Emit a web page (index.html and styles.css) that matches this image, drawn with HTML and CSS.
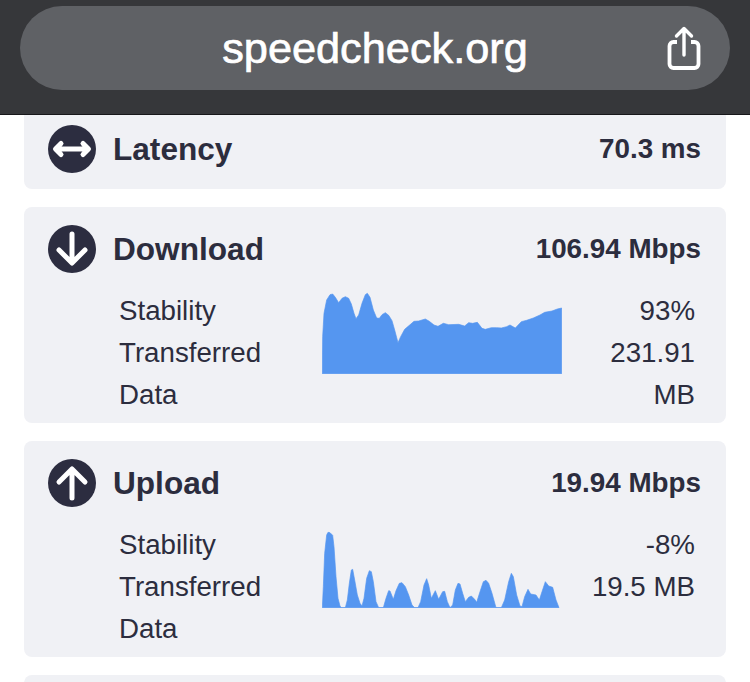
FILE: index.html
```html
<!DOCTYPE html>
<html>
<head lang="en">
	<meta charset="UTF-8">
	<title>speedcheck.org</title>
	<link rel="stylesheet" href="styles.css">
</head>
<body>
	<!-- browser address bar -->
	<header class="topbar">
		<div class="url-pill">
			<span class="url-text">speedcheck.org</span>
			<svg class="share-icon" width="36" height="44" viewBox="0 0 36 44">
				<path d="M11 16H7.500a4 4 0 0 0-4 4v18a4 4 0 0 0 4 4h21a4 4 0 0 0 4-4V20a4 4 0 0 0-4-4H25" fill="none" stroke="#fff" stroke-width="3.800"/>
				<path d="M18 29V3M10.500 10L18 2.500L25.500 10" fill="none" stroke="#fff" stroke-width="3.400" stroke-linecap="round" stroke-linejoin="round"/>
			</svg>
		</div>
	</header>

	<main class="results">
		<section class="card card-cut">
			<div class="card-head">
				<svg class="round-icon" width="48" height="48" viewBox="0 0 48 48">
					<circle cx="24" cy="24" r="24" fill="#2c2d40"/>
					<path d="M10 24H38M13 18.500L7.500 24L13 29.500M35 18.500L40.500 24L35 29.500" fill="none" stroke="#fff" stroke-width="5" stroke-linejoin="round" stroke-linecap="round"/>
				</svg>
				<h2 class="card-title">Latency</h2>
				<span class="card-value">70.3 ms</span>
			</div>
		</section>

		<section class="card">
			<div class="card-head">
				<svg class="round-icon" width="48" height="48" viewBox="0 0 48 48">
					<circle cx="24" cy="24" r="24" fill="#2c2d40"/>
					<path d="M24 9V37M11 25L24 38L37 25" fill="none" stroke="#fff" stroke-width="5" stroke-linejoin="round" stroke-linecap="round"/>
				</svg>
				<h2 class="card-title">Download</h2>
				<span class="card-value">106.94 Mbps</span>
			</div>
			<div class="card-body">
				<div class="labels">
					<div>Stability</div>
					<div>Transferred Data</div>
				</div>
				<svg class="chart" width="240" height="82" viewBox="36 36 720 246">
					<path d="M37 281L38 170L42 100L50 60L60 44L68 42L76 52L86 68L96 55L106 50L116 55L124 72L132 100L138 116L146 105L156 70L166 44L172 40L180 52L190 90L200 114L208 115L216 104L226 98L236 106L246 122L254 150L264 188L272 170L284 148L298 136L312 124L326 123L346 117L358 124L372 135L384 139L400 130L416 134L446 133L464 138L476 128L488 130L502 127L516 145L526 148L544 143L560 143L574 144L590 140L600 135L616 144L634 125L650 121L670 114L690 105L704 97L726 93L742 87L755 84V281Z"/>
				</svg>
				<div class="values">
					<div>93%</div>
					<div>231.91 MB</div>
				</div>
			</div>
		</section>

		<section class="card">
			<div class="card-head">
				<svg class="round-icon" width="48" height="48" viewBox="0 0 48 48">
					<circle cx="24" cy="24" r="24" fill="#2c2d40"/>
					<path d="M24 39V11M11 23L24 10L37 23" fill="none" stroke="#fff" stroke-width="5" stroke-linejoin="round" stroke-linecap="round"/>
				</svg>
				<h2 class="card-title">Upload</h2>
				<span class="card-value">19.94 Mbps</span>
			</div>
			<div class="card-body">
				<div class="labels">
					<div>Stability</div>
					<div>Transferred Data</div>
				</div>
				<svg class="chart" width="240" height="82" viewBox="36 18 720 246">
					<path d="M37 263L40 200L44 100L50 45L54 37L60 38L68 46L72 80L78 170L84 235L90 258L94 263H106L112 240L118 190L124 150L128 148L134 180L142 225L150 250L156 258L162 235L170 175L178 152L184 155L190 185L198 245L206 263H220L228 235L236 212L240 213L250 238L258 212L268 190L276 188L286 200L296 225L306 255L314 263H324L332 245L342 195L350 176L356 195L364 235L376 212L386 238L398 215L404 214L412 245L420 263L428 255L436 210L444 190L450 192L458 220L466 245L476 232L484 228L494 238L500 247L510 215L520 185L528 181L536 190L546 220L558 263H574L584 240L596 185L604 160L610 170L620 225L630 258L636 260L644 230L654 208L662 222L678 225L688 240L696 215L706 185L716 198L728 202L738 240L747 263Z"/>
				</svg>
				<div class="values">
					<div>-8%</div>
					<div>19.5 MB</div>
				</div>
			</div>
		</section>

		<section class="card card-next"></section>
	</main>
</body>
</html>
```

FILE: styles.css
```css
html, body {
	margin: 0;
	height: 682px;
	overflow: hidden;
}

body {
	background-color: #FFFFFF;
	font-family: "Liberation Sans", Arial, sans-serif;
	color: #2c2d3e;
}

.topbar {
	height: 115px;
	padding: 6px 20px 0 20px;
	box-sizing: border-box;
	background: #36373a;
	border-bottom: 1px solid #17171a;
}

.url-pill {
	position: relative;
	display: flex;
	align-items: center;
	justify-content: center;
	height: 84px;
	border-radius: 42px;
	background: #5f6165;
}

.url-text {
	font-size: 43.3px;
	line-height: 84px;
	color: #FFFFFF;
	-webkit-text-stroke: 0.7px #FFFFFF;
}

.share-icon {
	position: absolute;
	right: 28px;
	top: 20px;
}

.results {
	display: flex;
	flex-direction: column;
	gap: 18px;
	padding: 0 24px;
}

.card {
	padding: 18px 25px 7px 24px;
	background: #f0f1f5;
	border-radius: 8px;
}

/* scrolled under the address bar */
.card-cut {
	padding-top: 10px;
	padding-bottom: 16px;
	border-radius: 0 0 8px 8px;
}

.card-next {
	height: 40px;
	box-sizing: border-box;
}

.card-head {
	display: flex;
	align-items: center;
	height: 48px;
}

.round-icon {
	flex: none;
	margin-right: 17px;
}

.card-title {
	margin: 0;
	font-size: 31.6px;
	font-weight: bold;
}

.card-value {
	margin-left: auto;
	font-size: 27.8px;
	font-weight: bold;
}

.card-body {
	display: flex;
	align-items: flex-start;
	margin-top: 17px;
	padding: 0 6px 0 71px;
	font-size: 27.7px;
	line-height: 42px;
}

.labels {
	flex: none;
	width: 203px;
}

.chart {
	flex: none;
	display: block;
	margin-top: 2px;
}

.chart path {
	fill: #5596f0;
	stroke: #5596f0;
	stroke-width: 2;
	stroke-linejoin: round;
}

.values {
	flex: 1;
	margin-left: 24px;
	text-align: right;
}
```
